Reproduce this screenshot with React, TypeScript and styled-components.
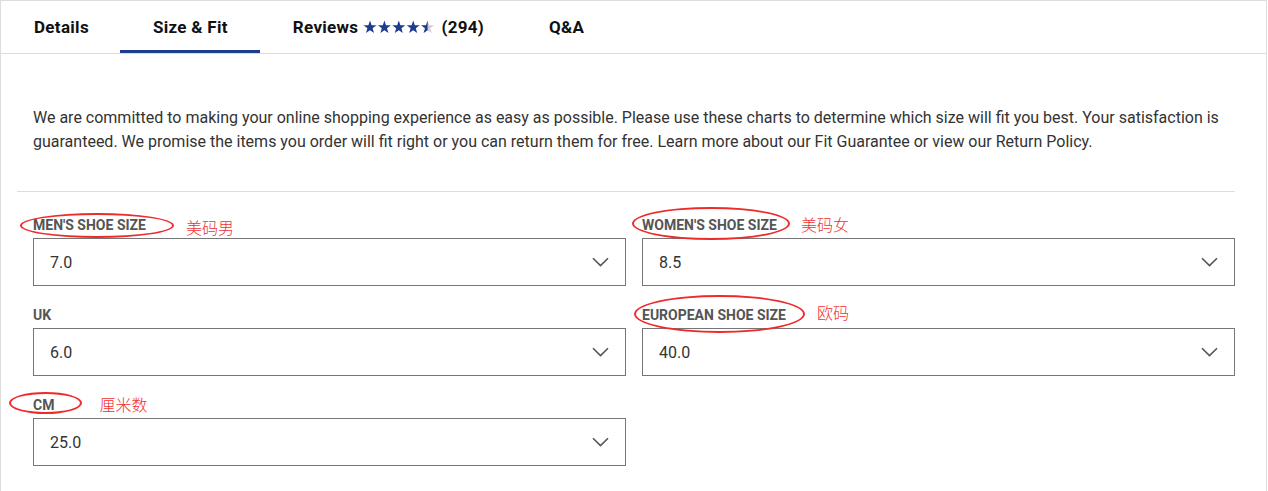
import styled, { createGlobalStyle } from "styled-components";

const GlobalStyle = createGlobalStyle`
  body {
    margin: 0;
    background: #fff;
    font-family: Roboto, "Liberation Sans", Arial, sans-serif;
  }
`;

const Panel = styled.div`
  width: 1265px;
  border: 1px solid #dddddd;
  border-bottom: none;
  min-height: 490px;
`;

const TabBar = styled.div`
  display: flex;
  height: 52px;
  border-bottom: 1px solid #dddddd;
`;

const Tab = styled.div<{ $active?: boolean }>`
  display: flex;
  align-items: center;
  gap: 5px;
  padding: 3px 32px 0 33px;
  box-sizing: border-box;
  height: 52px;
  font-size: 17px;
  font-weight: 700;
  letter-spacing: 0.3px;
  color: #111;
  border-bottom: 3px solid ${(p) => (p.$active ? "#1d3c8e" : "transparent")};
  &:first-child {
    padding-right: 31px;
  }
`;

const Count = styled.span`
  margin-left: 1px;
`;

const Content = styled.div`
  padding: 52px 31px 24px 16px;
`;

const Intro = styled.p`
  margin: 0 0 37px;
  padding: 0 16px;
  font-size: 16px;
  line-height: 24px;
  color: #333;
`;

const Divider = styled.hr`
  margin: 0;
  border: none;
  border-top: 1px solid #dddddd;
`;

const FormGrid = styled.div`
  display: grid;
  grid-template-columns: 1fr 1fr;
  column-gap: 16px;
  row-gap: 20px;
  padding: 24px 0 0 16px;
`;

const Field = styled.div`
  display: flex;
  flex-direction: column;
`;

const LabelRow = styled.div`
  display: flex;
  align-items: center;
  height: 16px;
  margin-bottom: 6px;
`;

const LabelText = styled.span`
  position: relative;
  top: 1px;
  font-size: 14px;
  font-weight: 700;
  line-height: 16px;
  color: #555;
  text-transform: uppercase;
`;

const Ring = styled.span<{ $l: number; $r: number; $t: number; $b: number }>`
  position: absolute;
  left: ${(p) => -p.$l}px;
  right: ${(p) => -p.$r}px;
  top: ${(p) => -p.$t}px;
  bottom: ${(p) => -p.$b}px;
  border: 2.5px solid #ee2b2b;
  border-radius: 50%;
  pointer-events: none;
`;

const Note = styled.span<{ $gap: number; $dy: number }>`
  margin-left: ${(p) => p.$gap}px;
  transform: translateY(${(p) => p.$dy}px);
  font-family: "Noto Sans CJK SC", sans-serif;
  font-size: 16px;
  font-weight: 300;
  line-height: 16px;
  color: #f03030;
`;

const SelectBox = styled.div`
  display: flex;
  align-items: center;
  justify-content: space-between;
  height: 48px;
  box-sizing: border-box;
  padding: 0 16px;
  border: 1px solid #767676;
  font-size: 16px;
  color: #333;
`;

function Chevron() {
  return (
    <svg width="17" height="10" viewBox="0 0 17 10" fill="none">
      <path d="M1 1.2 L8.5 8.6 L16 1.2" stroke="#555" strokeWidth="1.6" />
    </svg>
  );
}

const starPath =
  "M7 0.6 L8.6 5.2 L13.5 5.3 L9.6 8.3 L11 13 L7 10.2 L3 13 L4.4 8.3 L0.5 5.3 L5.4 5.2 Z";

function Stars() {
  return (
    <svg width="72" height="14" viewBox="0 0 72 14">
      <defs>
        <clipPath id="half">
          <rect x="57.6" y="0" width="7" height="14" />
        </clipPath>
      </defs>
      {[0, 1, 2, 3].map((i) => (
        <path key={i} d={starPath} fill="#1d3c8e" transform={`translate(${i * 14.4} 0)`} />
      ))}
      <path d={starPath} fill="#cfcfcf" transform="translate(57.6 0)" />
      <g clipPath="url(#half)">
        <path d={starPath} fill="#1d3c8e" transform="translate(57.6 0)" />
      </g>
    </svg>
  );
}

type Mark = { l: number; r: number; t: number; b: number; note: string; gap: number; dy: number };

type SizeField = { label: string; value: string; mark?: Mark };

const fields: SizeField[] = [
  { label: "Men's Shoe Size", value: "7.0", mark: { l: 13, r: 28, t: 4, b: 5, note: "美码男", gap: 40, dy: 3 } },
  { label: "Women's Shoe Size", value: "8.5", mark: { l: 10, r: 13, t: 10, b: 7, note: "美码女", gap: 24, dy: 0 } },
  { label: "UK", value: "6.0" },
  { label: "European Shoe Size", value: "40.0", mark: { l: 8, r: 19, t: 12, b: 10, note: "欧码", gap: 31, dy: -2 } },
  { label: "CM", value: "25.0", mark: { l: 24, r: 28, t: 5, b: 1, note: "厘米数", gap: 45, dy: 0 } },
];

export default function App() {
  return (
    <>
      <GlobalStyle />
      <Panel>
        <TabBar>
          <Tab>Details</Tab>
          <Tab $active>Size &amp; Fit</Tab>
          <Tab>
            Reviews
            <Stars />
            <Count>(294)</Count>
          </Tab>
          <Tab>Q&amp;A</Tab>
        </TabBar>
        <Content>
          <Intro>
            We are committed to making your online shopping experience as easy as possible. Please use these
            charts to determine which size will fit you best. Your satisfaction is guaranteed. We promise the
            items you order will fit right or you can return them for free. Learn more about our Fit Guarantee or
            view our Return Policy.
          </Intro>
          <Divider />
          <FormGrid>
            {fields.map((f) => (
              <Field key={f.label}>
                <LabelRow>
                  <LabelText>
                    {f.label}
                    {f.mark && <Ring $l={f.mark.l} $r={f.mark.r} $t={f.mark.t} $b={f.mark.b} />}
                  </LabelText>
                  {f.mark && (
                    <Note $gap={f.mark.gap} $dy={f.mark.dy}>
                      {f.mark.note}
                    </Note>
                  )}
                </LabelRow>
                <SelectBox>
                  <span>{f.value}</span>
                  <Chevron />
                </SelectBox>
              </Field>
            ))}
          </FormGrid>
        </Content>
      </Panel>
    </>
  );
}
